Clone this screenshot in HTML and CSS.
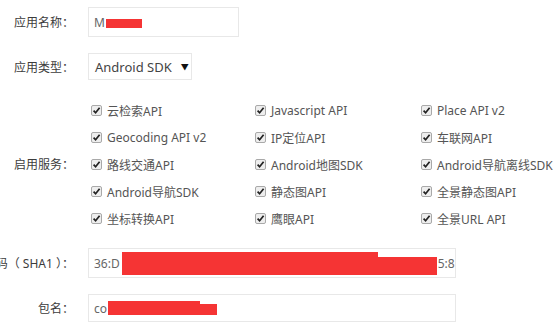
FILE: index.html
```html
<!DOCTYPE html>
<html lang="zh">
<head>
<meta charset="utf-8">
<link rel="stylesheet" href="styles.css">
</head>
<body>
<form class="form">
  <div class="row">
    <div class="label">应用名称：</div>
    <div class="field field-name"><span class="val">M</span><span class="redact r-name"></span></div>
  </div>
  <div class="row">
    <div class="label">应用类型：</div>
    <div class="field field-select"><span class="val">Android SDK</span><span class="arrow">▼</span></div>
  </div>
  <div class="row">
    <div class="label">启用服务：</div>
    <div class="services">
      <div class="svc"><span class="cb"></span>云检索API</div>
      <div class="svc"><span class="cb"></span>Javascript API</div>
      <div class="svc"><span class="cb"></span>Place API v2</div>
      <div class="svc"><span class="cb"></span>Geocoding API v2</div>
      <div class="svc"><span class="cb"></span>IP定位API</div>
      <div class="svc"><span class="cb"></span>车联网API</div>
      <div class="svc"><span class="cb"></span>路线交通API</div>
      <div class="svc"><span class="cb"></span>Android地图SDK</div>
      <div class="svc"><span class="cb"></span>Android导航离线SDK</div>
      <div class="svc"><span class="cb"></span>Android导航SDK</div>
      <div class="svc"><span class="cb"></span>静态图API</div>
      <div class="svc"><span class="cb"></span>全景静态图API</div>
      <div class="svc"><span class="cb"></span>坐标转换API</div>
      <div class="svc"><span class="cb"></span>鹰眼API</div>
      <div class="svc"><span class="cb"></span>全景URL API</div>
    </div>
  </div>
  <div class="row">
    <div class="label">安全码（ SHA1 ）：</div>
    <div class="field field-wide"><span class="val">36:D</span><span class="redact r-sha-a"></span><span class="redact r-sha-b"></span><span class="val tail">5:8</span></div>
  </div>
  <div class="row">
    <div class="label">包名：</div>
    <div class="field field-wide field-pkg"><span class="val">co</span><span class="redact r-pkg-a"></span><span class="redact r-pkg-b"></span></div>
  </div>
</form>
</body>
</html>
```
FILE: styles.css
```css
html, body {
  margin: 0;
  padding: 0;
  background: #fff;
}
body {
  font-family: "Noto Sans", "Noto Sans CJK SC", sans-serif;
  font-size: 12px;
  color: #555;
  overflow: hidden;
}
.form {
  display: flex;
  flex-direction: column;
  gap: 16px;
  padding-top: 7px;
}
.row {
  display: flex;
  align-items: center;
}
.label {
  width: 74px;
  flex: none;
  display: flex;
  justify-content: flex-end;
  white-space: nowrap;
  margin-right: 14px;
  color: #3c3c3c;
}
.field {
  box-sizing: border-box;
  height: 30px;
  border: 1px solid #e8e8e8;
  display: flex;
  align-items: center;
  padding-left: 5px;
  color: #666;
  overflow: hidden;
  white-space: nowrap;
}
.field-name { width: 151px; }
.field-select {
  width: 104px;
  height: 27px;
  padding-left: 6px;
  color: #444;
  font-size: 13px;
}
.arrow {
  font-size: 8px;
  margin-left: 9px;
  color: #111;
}
.field-wide { width: 368px; }
.field-pkg { height: 28px; }
.redact {
  background: #f53434;
  display: block;
}
.r-name { width: 36px; height: 9px; margin-left: 1px; margin-top: 2px; }
.r-sha-a { width: 256px; height: 23px; margin-left: 2px; }
.r-sha-b { width: 59px; height: 18px; margin-top: 5px; }
.tail { margin-left: 1px; }
.r-pkg-a { width: 92px; height: 14px; margin-left: 1px; }
.r-pkg-b { width: 17px; height: 11px; margin-top: 3px; }
.services {
  display: grid;
  grid-template-columns: 164px 166px auto;
  grid-auto-rows: 27px;
  margin-left: 3px;
  margin-top: 1px;
}
.svc {
  display: flex;
  align-items: center;
  white-space: nowrap;
  color: #555;
}
.cb {
  box-sizing: border-box;
  width: 11px;
  height: 11px;
  border: 1px solid #a9a9a9;
  border-radius: 2px;
  background: #eee url("data:image/svg+xml;utf8,<svg xmlns='http://www.w3.org/2000/svg' viewBox='0 0 9 9'><path d='M1.6 4.6 L3.6 6.8 L7.6 1.8' fill='none' stroke='%23222' stroke-width='1.7'/></svg>") center/9px 9px no-repeat;
  margin-right: 5px;
  flex: none;
}
```
